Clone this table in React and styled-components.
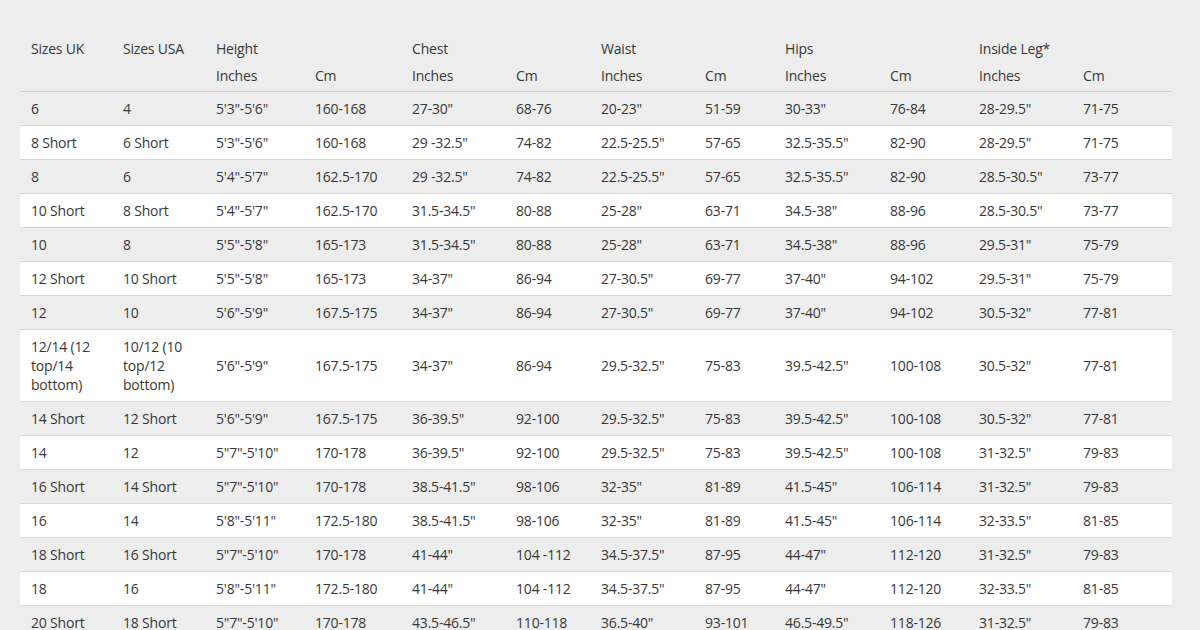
import styled, { createGlobalStyle } from "styled-components";

const GlobalStyle = createGlobalStyle`
  html, body {
    margin: 0;
    padding: 0;
    background: #ededed;
  }
  body {
    font-family: "Open Sans", "Noto Sans", sans-serif;
    color: #383838;
  }
`;

const Page = styled.div`
  width: 1200px;
  height: 630px;
  overflow: hidden;
  padding: 35px 0 0 20px;
  box-sizing: border-box;
`;

const Table = styled.table`
  width: 1152px;
  table-layout: fixed;
  border-collapse: collapse;
  font-size: 14px;
  letter-spacing: -0.2px;
`;

const HeadCell = styled.th`
  text-align: left;
  font-weight: 400;
  line-height: 19px;
  padding: ${props => props.last ? "4px 8px 6px 11px" : "4px 8px 4px 11px"};
  vertical-align: top;
  border-bottom: ${props => props.last ? "1px solid #cfcfcf" : "none"};
`;

const Row = styled.tr`
  background: ${props => props.white ? "#ffffff" : "transparent"};
  border-bottom: 1px solid #d9d9d9;
`;

const Cell = styled.td`
  line-height: 19px;
  padding: 7px 8px 7px 11px;
  vertical-align: middle;
  white-space: ${props => props.wrap ? "normal" : "nowrap"};
`;

const widths = [92, 93, 99, 97, 104, 85, 104, 80, 105, 89, 104, 100];

const groups = ["Height", "Chest", "Waist", "Hips", "Inside Leg*"];

const rows = [
  ["6", "4", `5'3"-5'6"`, "160-168", `27-30"`, "68-76", `20-23"`, "51-59", `30-33"`, "76-84", `28-29.5"`, "71-75"],
  ["8 Short", "6 Short", `5'3"-5'6"`, "160-168", `29 -32.5"`, "74-82", `22.5-25.5"`, "57-65", `32.5-35.5"`, "82-90", `28-29.5"`, "71-75"],
  ["8", "6", `5'4"-5'7"`, "162.5-170", `29 -32.5"`, "74-82", `22.5-25.5"`, "57-65", `32.5-35.5"`, "82-90", `28.5-30.5"`, "73-77"],
  ["10 Short", "8 Short", `5'4"-5'7"`, "162.5-170", `31.5-34.5"`, "80-88", `25-28"`, "63-71", `34.5-38"`, "88-96", `28.5-30.5"`, "73-77"],
  ["10", "8", `5'5"-5'8"`, "165-173", `31.5-34.5"`, "80-88", `25-28"`, "63-71", `34.5-38"`, "88-96", `29.5-31"`, "75-79"],
  ["12 Short", "10 Short", `5'5"-5'8"`, "165-173", `34-37"`, "86-94", `27-30.5"`, "69-77", `37-40"`, "94-102", `29.5-31"`, "75-79"],
  ["12", "10", `5'6"-5'9"`, "167.5-175", `34-37"`, "86-94", `27-30.5"`, "69-77", `37-40"`, "94-102", `30.5-32"`, "77-81"],
  ["12/14 (12 top/14 bottom)", "10/12 (10 top/12 bottom)", `5'6"-5'9"`, "167.5-175", `34-37"`, "86-94", `29.5-32.5"`, "75-83", `39.5-42.5"`, "100-108", `30.5-32"`, "77-81"],
  ["14 Short", "12 Short", `5'6"-5'9"`, "167.5-175", `36-39.5"`, "92-100", `29.5-32.5"`, "75-83", `39.5-42.5"`, "100-108", `30.5-32"`, "77-81"],
  ["14", "12", `5"7"-5'10"`, "170-178", `36-39.5"`, "92-100", `29.5-32.5"`, "75-83", `39.5-42.5"`, "100-108", `31-32.5"`, "79-83"],
  ["16 Short", "14 Short", `5"7"-5'10"`, "170-178", `38.5-41.5"`, "98-106", `32-35"`, "81-89", `41.5-45"`, "106-114", `31-32.5"`, "79-83"],
  ["16", "14", `5'8"-5'11"`, "172.5-180", `38.5-41.5"`, "98-106", `32-35"`, "81-89", `41.5-45"`, "106-114", `32-33.5"`, "81-85"],
  ["18 Short", "16 Short", `5"7"-5'10"`, "170-178", `41-44"`, "104 -112", `34.5-37.5"`, "87-95", `44-47"`, "112-120", `31-32.5"`, "79-83"],
  ["18", "16", `5'8"-5'11"`, "172.5-180", `41-44"`, "104 -112", `34.5-37.5"`, "87-95", `44-47"`, "112-120", `32-33.5"`, "81-85"],
  ["20 Short", "18 Short", `5"7"-5'10"`, "170-178", `43.5-46.5"`, "110-118", `36.5-40"`, "93-101", `46.5-49.5"`, "118-126", `31-32.5"`, "79-83"],
];

export default function App() {
  return (
    <Page>
      <GlobalStyle />
      <Table>
        <colgroup>
          {widths.map((w, i) => (
            <col key={i} style={{ width: w }} />
          ))}
        </colgroup>
        <thead>
          <tr>
            <HeadCell>Sizes UK</HeadCell>
            <HeadCell>Sizes USA</HeadCell>
            {groups.map(g => (
              <HeadCell key={g} colSpan={2}>{g}</HeadCell>
            ))}
          </tr>
          <tr>
            <HeadCell last />
            <HeadCell last />
            {groups.map(g => [
              <HeadCell last key={g + "-in"}>Inches</HeadCell>,
              <HeadCell last key={g + "-cm"}>Cm</HeadCell>,
            ])}
          </tr>
        </thead>
        <tbody>
          {rows.map((r, i) => (
            <Row key={i} white={i % 2 === 1}>
              {r.map((v, j) => (
                <Cell key={j} wrap={j < 2}>{v}</Cell>
              ))}
            </Row>
          ))}
        </tbody>
      </Table>
    </Page>
  );
}
